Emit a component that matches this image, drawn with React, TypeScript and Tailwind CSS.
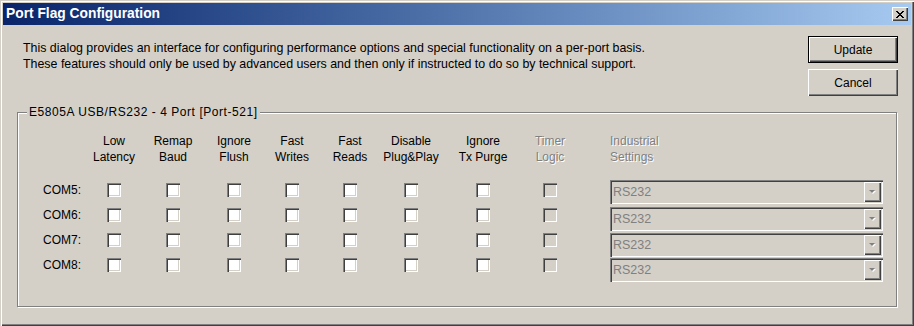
import React from 'react'

const raised =
  'shadow-[inset_1px_1px_0_#ffffff,inset_-1px_-1px_0_#404040,inset_-2px_-2px_0_#808080]'
const sunken =
  'shadow-[inset_1px_1px_0_#808080,inset_2px_2px_0_#404040,inset_-1px_-1px_0_#ffffff,inset_-2px_-2px_0_#d4d0c8]'
const etched = 'text-[#808080] [text-shadow:1px_1px_0_#ffffff]'

const columns = [
  { w: 'w-[58px]', top: 'Low', bottom: 'Latency' },
  { w: 'w-[60px]', top: 'Remap', bottom: 'Baud' },
  { w: 'w-[62px]', top: 'Ignore', bottom: 'Flush' },
  { w: 'w-[54px]', top: 'Fast', bottom: 'Writes' },
  { w: 'w-[62px]', top: 'Fast', bottom: 'Reads' },
  { w: 'w-[60px]', top: 'Disable', bottom: 'Plug&Play' },
  { w: 'w-[84px]', top: 'Ignore', bottom: 'Tx Purge' },
  { w: 'w-[50px]', top: 'Timer', bottom: 'Logic', disabled: true },
]

const ports = ['COM5:', 'COM6:', 'COM7:', 'COM8:']
const comboGaps = ['mt-[3px]', 'mt-[3px]', 'mt-[2px]', 'mt-[1px]']

const closeGlyph = ['11....11', '.11..11.', '..1111..', '...11...', '..1111..', '.11..11.', '11....11']

function CloseIcon() {
  return (
    <svg width="8" height="7" viewBox="0 0 8 7" shapeRendering="crispEdges">
      {closeGlyph.flatMap((row, y) =>
        row.split('').map((c, x) => (c === '1' ? <rect key={`${x}-${y}`} x={x} y={y} width="1" height="1" fill="#000" /> : null))
      )}
    </svg>
  )
}

function Checkbox({ disabled }: { disabled?: boolean }) {
  return <div className={`w-[14px] h-[14px] ${sunken} ${disabled ? 'bg-[#d4d0c8]' : 'bg-white'}`} />
}

function Combo({ className }: { className: string }) {
  return (
    <div className={`${className} w-[273px] h-[24px] ${sunken} bg-[#d4d0c8] flex items-center`}>
      <span className="pl-[3px] text-[#808080] text-[12.5px]">RS232</span>
      <div className={`ml-auto mr-[2px] w-[17px] h-[20px] ${raised} bg-[#d4d0c8] flex items-center justify-center`}>
        <svg width="9" height="6" viewBox="0 0 9 6">
          <path d="M2 2h6l-3 3z" fill="#ffffff" />
          <path d="M1 1h6l-3 3z" fill="#808080" />
        </svg>
      </div>
    </div>
  )
}

export default function App() {
  return (
    <div className="w-[914px] h-[326px] bg-[#d4d0c8] p-[3px] text-[12px] leading-[16px] text-black font-['Liberation_Sans',Arial,sans-serif] shadow-[inset_1px_1px_0_#d4d0c8,inset_2px_2px_0_#ffffff,inset_-1px_-1px_0_#404040,inset_-2px_-2px_0_#808080] flex flex-col">
      <div className="h-[22px] bg-linear-to-r from-[#0a246a] to-[#a6caf0] flex items-center justify-between pl-[3px] pr-[3px]">
        <span className="text-white font-bold text-[13.8px]">Port Flag Configuration</span>
        <div className={`w-[16px] h-[14px] bg-[#d4d0c8] ${raised} flex items-center justify-center`}>
          <CloseIcon />
        </div>
      </div>

      <div className="flex">
        <div className="ml-[20px] mt-[15px] whitespace-nowrap text-[12.4px]">
          <div>This dialog provides an interface for configuring performance options and special functionality on a per-port basis.</div>
          <div>These features should only be used by advanced users and then only if instructed to do so by technical support.</div>
        </div>
        <div className="ml-auto mr-[13px] mt-[11px] flex flex-col gap-[6px]">
          <div className="w-[90px] h-[27px] border border-black">
            <div className={`w-full h-full ${raised} flex items-center justify-center`}>Update</div>
          </div>
          <div className={`w-[90px] h-[27px] ${raised} flex items-center justify-center`}>Cancel</div>
        </div>
      </div>

      <div className="relative mt-[16px] mx-[14px] h-[195px] border border-[#808080] shadow-[1px_1px_0_#ffffff,inset_1px_1px_0_#ffffff]">
        <span className="absolute left-[9px] top-[-9px] px-[2px] bg-[#d4d0c8] whitespace-nowrap tracking-[0.55px]">
          E5805A USB/RS232 - 4 Port [Port-521]
        </span>

        <div className="pt-[20px] flex">
          <div className="w-[67px]" />
          {columns.map((c, i) => (
            <div key={i} className={`${c.w} text-center whitespace-nowrap ${c.disabled ? etched : ''}`}>
              <div>{c.top}</div>
              <div>{c.bottom}</div>
            </div>
          ))}
          <div className={`ml-[35px] ${etched}`}>
            <div>Industrial</div>
            <div>Settings</div>
          </div>
        </div>

        <div className="mt-[12px] flex">
          <div className="flex flex-col">
            {ports.map((p) => (
              <div key={p} className="h-[25px] flex items-center">
                <div className="w-[67px] pl-[25px]">{p}</div>
                {columns.map((c, i) => (
                  <div key={i} className={`${c.w} flex justify-center`}>
                    <Checkbox disabled={c.disabled} />
                  </div>
                ))}
              </div>
            ))}
          </div>
          <div className="ml-[35px] flex flex-col">
            {comboGaps.map((g, i) => (
              <Combo key={i} className={g} />
            ))}
          </div>
        </div>
      </div>
    </div>
  )
}
